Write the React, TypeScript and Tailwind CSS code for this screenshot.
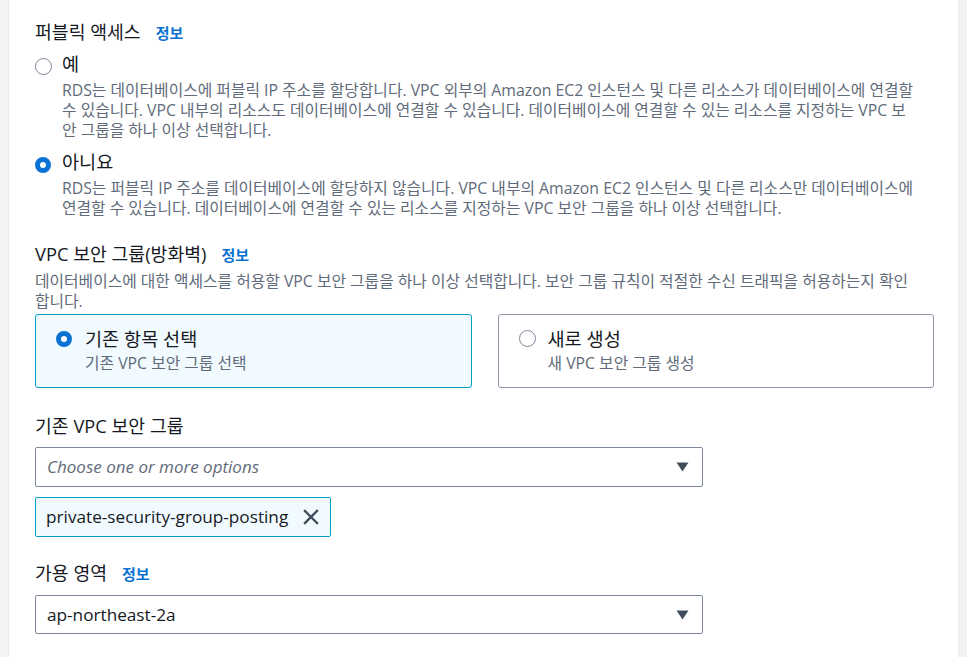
import React from "react";

const FONT = { fontFamily: '"Open Sans", "Noto Sans CJK KR", sans-serif' };

function Radio({ checked }: { checked?: boolean }) {
  return checked ? (
    <span className="inline-block w-[16px] h-[16px] rounded-full border-[5px] border-[#0972d3] bg-white shrink-0" />
  ) : (
    <span className="inline-block w-[17px] h-[17px] rounded-full border-[1.5px] border-[#7d8998] bg-white shrink-0" />
  );
}

function Info() {
  return <span className="ml-[15px] text-[15px] font-bold text-[#0972d3]">정보</span>;
}

function Caret() {
  return (
    <svg width="13" height="10" viewBox="0 0 13 10" className="shrink-0">
      <path d="M0.5 0.5 H12.5 L6.5 9.5 Z" fill="#414d5c" />
    </svg>
  );
}

export default function App() {
  return (
    <div className="w-[967px] h-[657px] flex bg-[#f2f3f3] overflow-hidden" style={FONT}>
      <div className="w-[8px] shrink-0" />
      <div className="flex-1 bg-white border-l border-r border-[#e9ebed] pl-[26px] pr-[24px] pt-[21px]">
        {/* Public access */}
        <div className="text-[18.3px] leading-[22px] text-[#16191f] flex items-baseline">
          퍼블릭 액세스<Info />
        </div>
        <div className="mt-[9px]">
          <div className="flex items-center text-[18.6px] leading-[22px] text-[#16191f]">
            <span className="w-[18px] flex justify-start mt-[4px]"><Radio /></span>
            <span className="ml-[9px]">예</span>
          </div>
          <div className="ml-[27px] mt-[5px] text-[15.8px] leading-[20px] text-[#5f6b7a]">
            <div className="whitespace-nowrap">RDS는 데이터베이스에 퍼블릭 IP 주소를 할당합니다. VPC 외부의 Amazon EC2 인스턴스 및 다른 리소스가 데이터베이스에 연결할</div>
            <div className="whitespace-nowrap">수 있습니다. VPC 내부의 리소스도 데이터베이스에 연결할 수 있습니다. 데이터베이스에 연결할 수 있는 리소스를 지정하는 VPC 보</div>
            <div className="whitespace-nowrap">안 그룹을 하나 이상 선택합니다.</div>
          </div>
        </div>
        <div className="mt-[11px]">
          <div className="flex items-center text-[18.6px] leading-[22px] text-[#16191f]">
            <span className="w-[18px] flex justify-start mt-[5px]"><Radio checked /></span>
            <span className="ml-[9px]">아니요</span>
          </div>
          <div className="ml-[27px] mt-[5px] text-[15.8px] leading-[20px] text-[#5f6b7a]">
            <div className="whitespace-nowrap">RDS는 퍼블릭 IP 주소를 데이터베이스에 할당하지 않습니다. VPC 내부의 Amazon EC2 인스턴스 및 다른 리소스만 데이터베이스에</div>
            <div className="whitespace-nowrap">연결할 수 있습니다. 데이터베이스에 연결할 수 있는 리소스를 지정하는 VPC 보안 그룹을 하나 이상 선택합니다.</div>
          </div>
        </div>

        {/* VPC security group */}
        <div className="mt-[25px] text-[18.3px] leading-[22px] text-[#16191f] flex items-baseline">
          VPC 보안 그룹(방화벽)<Info />
        </div>
        <div className="mt-[5px] text-[15.8px] leading-[20px] text-[#5f6b7a]">
          <div className="whitespace-nowrap">데이터베이스에 대한 액세스를 허용할 VPC 보안 그룹을 하나 이상 선택합니다. 보안 그룹 규칙이 적절한 수신 트래픽을 허용하는지 확인</div>
          <div className="whitespace-nowrap">합니다.</div>
        </div>
        <div className="mt-[3px] grid grid-cols-2 gap-[26px]">
          <div className="h-[74px] rounded-[3px] border border-[#00a1c9] bg-[#f1faff] pl-[20px] pt-[11px]">
            <div className="flex items-center text-[18.6px] leading-[22px] text-[#16191f]">
              <span className="mt-[3px]"><Radio checked /></span>
              <span className="ml-[13px]">기존 항목 선택</span>
            </div>
            <div className="ml-[29px] mt-[2px] text-[15.8px] leading-[20px] text-[#5f6b7a]">기존 VPC 보안 그룹 선택</div>
          </div>
          <div className="h-[74px] rounded-[3px] border border-[#8d99a8] bg-white pl-[20px] pt-[11px]">
            <div className="flex items-center text-[18.6px] leading-[22px] text-[#16191f]">
              <span className="mt-[3px]"><Radio /></span>
              <span className="ml-[12px]">새로 생성</span>
            </div>
            <div className="ml-[29px] mt-[2px] text-[15.8px] leading-[20px] text-[#5f6b7a]">새 VPC 보안 그룹 생성</div>
          </div>
        </div>

        {/* Existing VPC SG */}
        <div className="mt-[27px] text-[18.3px] leading-[22px] text-[#16191f]">기존 VPC 보안 그룹</div>
        <div className="mt-[10px] w-[668px] h-[40px] rounded-[2px] border border-[#7d8998] flex items-center justify-between pl-[11px] pr-[13px]">
          <span className="text-[17px] italic text-[#5f6b7a]">Choose one or more options</span>
          <Caret />
        </div>
        <div className="mt-[10px] inline-flex h-[40px] items-center rounded-[2px] border border-[#00a1c9] bg-[#f1faff] pl-[10px] pr-[11px]">
          <span className="text-[17.2px] text-[#16191f]">private-security-group-posting</span>
          <svg width="16" height="16" viewBox="0 0 16 16" className="ml-[15px]">
            <path d="M2 2 L14 14 M14 2 L2 14" stroke="#414d5c" strokeWidth="2.4" strokeLinecap="square" />
          </svg>
        </div>

        {/* Availability zone */}
        <div className="mt-[25px] text-[18.3px] leading-[22px] text-[#16191f] flex items-baseline">
          가용 영역<Info />
        </div>
        <div className="mt-[10px] w-[668px] h-[39px] rounded-[2px] border border-[#7d8998] flex items-center justify-between pl-[11px] pr-[13px]">
          <span className="text-[17.2px] text-[#16191f]">ap-northeast-2a</span>
          <Caret />
        </div>
      </div>
      <div className="w-[8px] shrink-0" />
    </div>
  );
}
